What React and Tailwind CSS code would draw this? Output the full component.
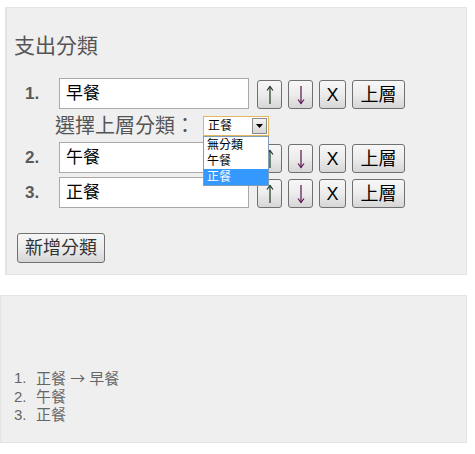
import React from "react";

const font = { fontFamily: '"Liberation Sans", "Noto Sans CJK TC", sans-serif' };

function Btn({ children, className = "", w }) {
  return (
    <button
      className={`h-[29px] ${w} rounded-[3px] border border-[#707070] bg-linear-to-b from-[#f7f7f7] via-[#ececec] to-[#d6d6d6] text-[18px] leading-none text-black flex items-center justify-center ${className}`}
    >
      {children}
    </button>
  );
}

function Arrow({ up, color }) {
  return (
    <svg width="8" height="20" viewBox="0 0 8 20">
      {up ? (
        <>
          <path d="M4 1.5V19" stroke={color} strokeWidth="1.2" fill="none" />
          <path d="M1 5.5L4 1.5L7 5.5" stroke={color} strokeWidth="1.2" fill="none" />
        </>
      ) : (
        <>
          <path d="M4 1V18.5" stroke={color} strokeWidth="1.2" fill="none" />
          <path d="M1 14.5L4 18.5L7 14.5" stroke={color} strokeWidth="1.2" fill="none" />
        </>
      )}
    </svg>
  );
}

function Row({ n, value }) {
  return (
    <div className="flex items-center h-[31px]">
      <div className="w-[52px] pl-[18px] text-[17px] font-bold text-[#5a5a5a]">{n}.</div>
      <div className="w-[190px] h-[31px] border border-[#a9a9a9] bg-white flex items-center pl-[6px] text-[17px] text-black">
        {value}
      </div>
      <div className="flex items-center gap-[6px] ml-[8px] mt-[2px]">
        <Btn w="w-[25px]"><Arrow up color="#1c3a1c" /></Btn>
        <Btn w="w-[25px]"><Arrow color="#5c1050" /></Btn>
        <Btn w="w-[27px]">X</Btn>
        <Btn w="w-[53px]">上層</Btn>
      </div>
    </div>
  );
}

export default function App() {
  return (
    <div className="w-[475px] h-[454px] bg-white relative" style={font}>
      <div className="pt-[7px] pl-[5px]">
        <div className="w-[462px] h-[268px] bg-[#efefef] border border-[#e4e4e4] border-l-2 relative">
          <div className="pl-[7px] pt-[24px] text-[21px] leading-[28px] text-[#555]">支出分類</div>
          <div className="mt-[18px] flex flex-col gap-[4px]">
            <Row n={1} value="早餐" />
            <div className="h-[25px] flex items-center relative">
              <div className="pl-[48px] text-[20px] leading-none text-[#555]">選擇上層分類：</div>
              <div className="ml-[8px] w-[66px] h-[20px] border border-[#e2b660] bg-white flex items-center relative">
                <span className="pl-[4px] text-[12px] leading-none text-black flex-1">正餐</span>
                <span className="w-[15px] h-[16px] mr-[1px] bg-linear-to-b from-[#f4f4f4] to-[#d8d8d8] border border-[#8a8a8a] flex items-center justify-center">
                  <svg width="7" height="4" viewBox="0 0 7 4"><path d="M0 0h7L3.5 4z" fill="#000" /></svg>
                </span>
                <div className="absolute left-[-1px] top-[19px] w-[66px] border border-[#7f9db9] bg-white z-10 text-[12px] leading-[16px] text-black">
                  <div className="pl-[3px]">無分類</div>
                  <div className="pl-[3px]">午餐</div>
                  <div className="pl-[3px] bg-[#3399ff] text-white">正餐</div>
                </div>
              </div>
            </div>
            <Row n={2} value="午餐" />
            <Row n={3} value="正餐" />
          </div>
          <div className="mt-[25px] ml-[10px]">
            <button className="h-[30px] w-[88px] rounded-[3px] border border-[#707070] bg-linear-to-b from-[#f7f7f7] via-[#ececec] to-[#d6d6d6] text-[18px] leading-none text-[#333] flex items-center justify-center">
              新增分類
            </button>
          </div>
        </div>
      </div>
      <div className="mt-[20px] w-[467px] h-[148px] bg-[#efefef] border border-[#e4e4e4] pt-[73px] pl-[13px] text-[15px] leading-[18px] text-[#666]">
        <div className="flex">
          <span className="w-[22px]">1.</span>
          <span>正餐 <span className="text-[15px]" style={{ fontFamily: '"Noto Sans CJK TC", sans-serif' }}>→</span> 早餐</span>
        </div>
        <div className="flex"><span className="w-[22px]">2.</span><span>午餐</span></div>
        <div className="flex"><span className="w-[22px]">3.</span><span>正餐</span></div>
      </div>
    </div>
  );
}
